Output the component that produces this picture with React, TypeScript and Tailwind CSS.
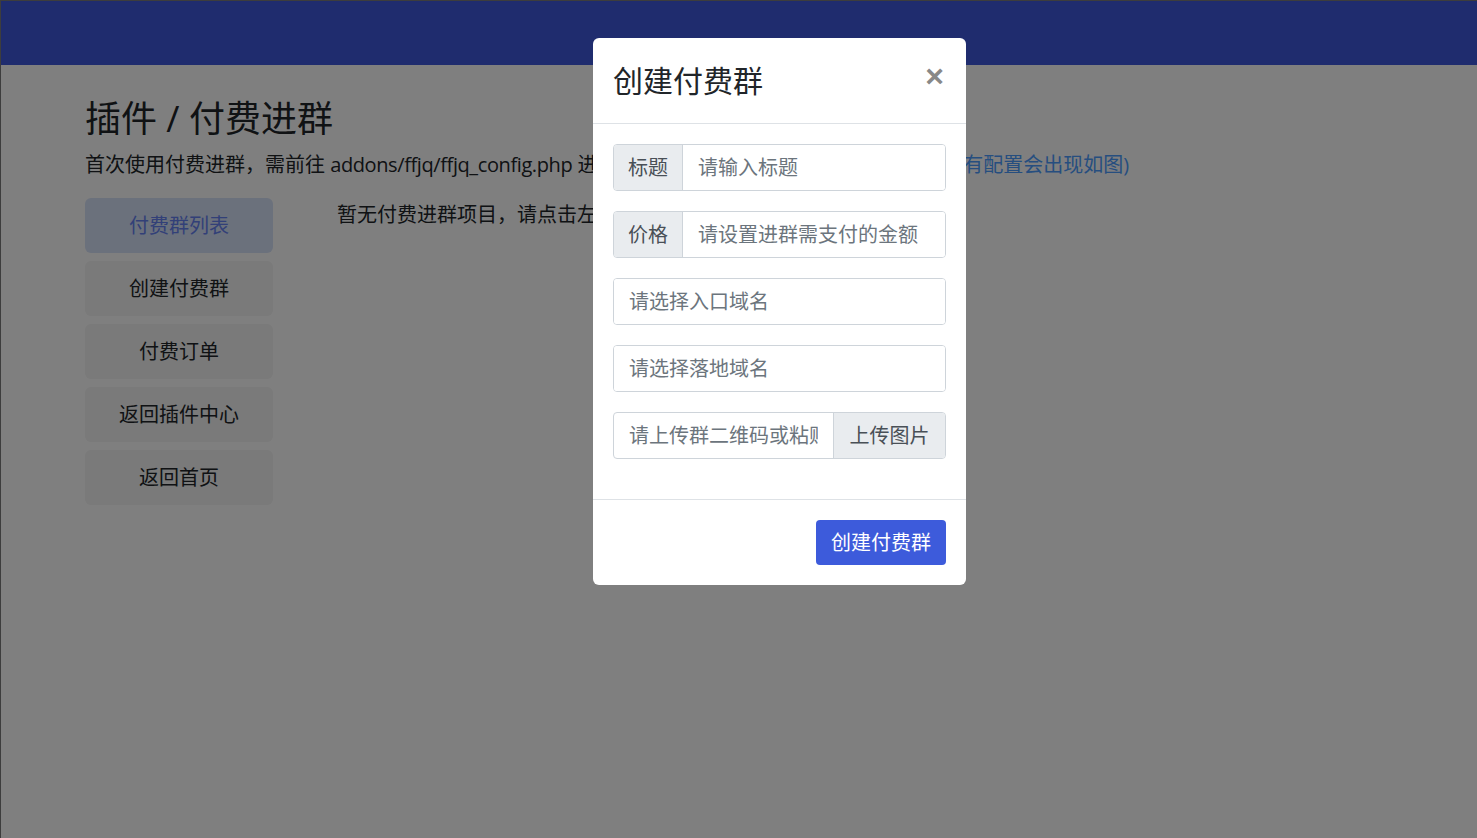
const font = { fontFamily: '"Open Sans", "Noto Sans CJK SC", sans-serif' }

const menu = ['付费群列表', '创建付费群', '付费订单', '返回插件中心', '返回首页']

function InputRow({ label, placeholder }: { label?: string; placeholder: string }) {
  return (
    <div className="flex h-[47px] rounded-[4px] border border-[#ced4da] overflow-hidden">
      {label && (
        <div className="flex items-center px-[14px] bg-[#e9ecef] border-r border-[#ced4da] text-[20px] text-[#495057]">
          {label}
        </div>
      )}
      <input
        className="flex-1 min-w-0 px-[15px] text-[20px] text-[#495057] placeholder:text-[#6c757d] outline-none bg-white"
        placeholder={placeholder}
        style={font}
      />
    </div>
  )
}

export default function App() {
  return (
    <div className="relative min-h-[838px] bg-white border-l border-t border-[#7a7a7a] overflow-hidden" style={font}>
      <div className="h-[64px] bg-[#3e59dc]" />
      <div className="pl-[84px] pr-8">
        <h1 className="mt-[32px] text-[36px] leading-[43px] text-[#212529]">插件 / 付费进群</h1>
        <p className="mt-[10px] text-[20px] leading-[30px] text-[#212529] whitespace-nowrap">
          首次使用付费进群，需前往 <span className="tracking-[-0.4px]">addons/ffjq/ffjq_config.php</span> 进行配置，
          <a className="text-[#4c9cff]">(点击这里查看配置说明，如果没有配置会出现如图)</a>
        </p>
        <div className="mt-[18px] flex gap-[64px]">
          <div className="w-[188px] flex flex-col gap-[8px]">
            {menu.map((m, i) => (
              <div
                key={m}
                className={`h-[55px] flex items-center justify-center rounded-[6px] text-[20px] ${
                  i === 0 ? 'bg-[#d7e2f8] text-[#6480f0]' : 'bg-[#f4f4f4] text-[#212529]'
                }`}
              >
                {m}
              </div>
            ))}
          </div>
          <p className="pt-[2px] text-[20px] leading-[30px] text-[#212529]">暂无付费进群项目，请点击左侧创建付费群按钮进行创建</p>
        </div>
      </div>

      <div className="fixed inset-0 bg-black/50" />

      <div className="absolute left-[592px] top-[37px] w-[373px] bg-white rounded-[6px]">
        <div className="h-[86px] px-[20px] flex items-center justify-between border-b border-[#dee2e6]">
          <h2 className="text-[30px] leading-[45px] text-[#212529]">创建付费群</h2>
          <span className="text-[32px] font-bold leading-none text-[#888888] -mt-[10px] mr-[2px]" style={{ fontFamily: '"Liberation Sans", sans-serif' }}>
            ×
          </span>
        </div>
        <div className="p-[20px] pb-[40px] flex flex-col gap-[20px]">
          <InputRow label="标题" placeholder="请输入标题" />
          <InputRow label="价格" placeholder="请设置进群需支付的金额" />
          <InputRow placeholder="请选择入口域名" />
          <InputRow placeholder="请选择落地域名" />
          <div className="flex h-[47px] rounded-[4px] border border-[#ced4da] overflow-hidden">
            <input
              className="flex-1 min-w-0 px-[15px] text-[20px] placeholder:text-[#6c757d] outline-none"
              placeholder="请上传群二维码或粘贴图片地址"
              style={font}
            />
            <div className="w-[112px] flex items-center justify-center bg-[#e9ecef] border-l border-[#ced4da] text-[20px] text-[#495057]">
              上传图片
            </div>
          </div>
        </div>
        <div className="border-t border-[#dee2e6] p-[20px] flex justify-end">
          <button className="h-[45px] px-[15px] rounded-[4px] bg-[#3d5bdb] text-white text-[20px]" style={font}>
            创建付费群
          </button>
        </div>
      </div>
    </div>
  )
}
